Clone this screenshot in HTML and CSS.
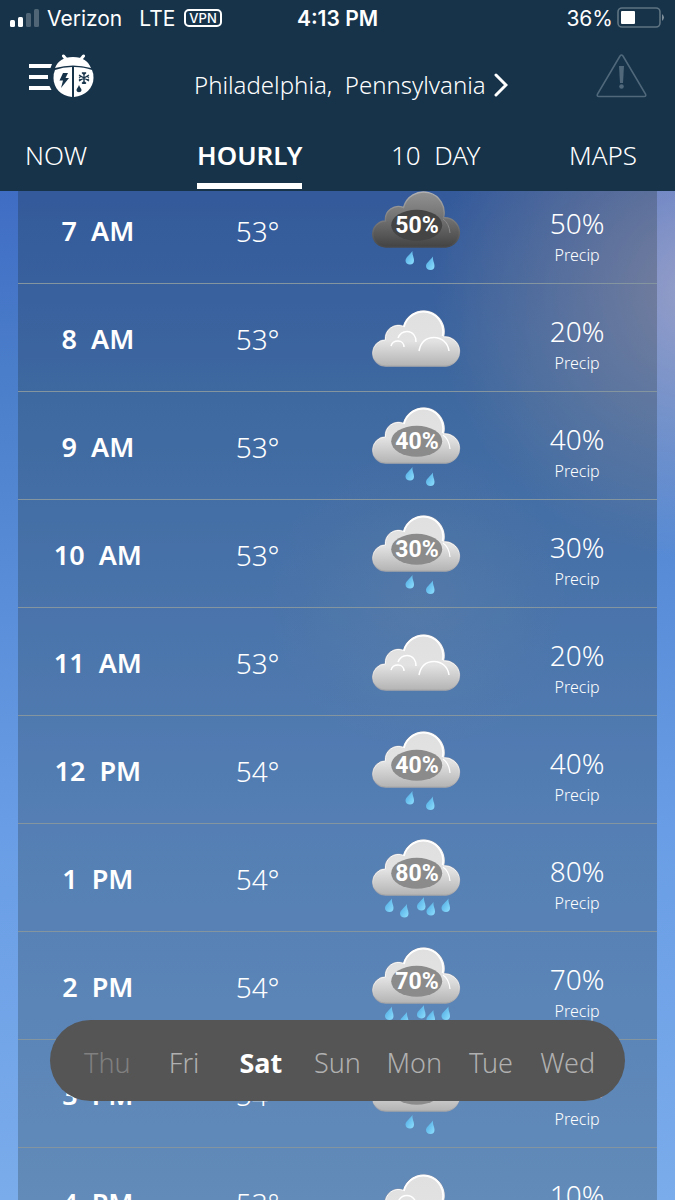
FILE: index.html
```html
<!DOCTYPE html>
<html lang="en">
<head>
  <meta charset="UTF-8">
  <meta name="viewport" content="width=device-width, initial-scale=1">
  <title>Hourly Forecast - Philadelphia</title>
  <link rel="stylesheet" href="styles.css">
</head>
<body>

<!-- shared icon shapes -->
<svg class="defs" width="0" height="0" aria-hidden="true">
  <defs>
    <linearGradient id="lightFill" x1="0" y1="0" x2="0" y2="1">
      <stop offset="0" stop-color="#e0e0e0"/>
      <stop offset="0.55" stop-color="#e2e2e2"/>
      <stop offset="1" stop-color="#b4b4b4"/>
    </linearGradient>
    <linearGradient id="darkFill" x1="0" y1="0" x2="0" y2="1">
      <stop offset="0" stop-color="#929292"/>
      <stop offset="0.5" stop-color="#707070"/>
      <stop offset="1" stop-color="#434343"/>
    </linearGradient>
    <linearGradient id="rim" x1="0" y1="0" x2="0" y2="1">
      <stop offset="0" stop-color="#fff"/>
      <stop offset="0.6" stop-color="#f4f4f4"/>
      <stop offset="1" stop-color="#a6a6a6"/>
    </linearGradient>
    <linearGradient id="darkRim" x1="0" y1="0" x2="0" y2="1">
      <stop offset="0" stop-color="#b2b2b2"/>
      <stop offset="1" stop-color="#484848"/>
    </linearGradient>
    <linearGradient id="dropFill" x1="0" y1="0" x2="1" y2="1">
      <stop offset="0" stop-color="#4aa6e0"/>
      <stop offset="1" stop-color="#8fe0ff"/>
    </linearGradient>
    <path id="cloudShape" d="M14 56 A13 13 0 0 1 13.5 30 A13 13 0 0 1 31.5 16.5 A20 20 0 1 1 71.5 26.8 A14.6 14.6 0 0 1 74 56 Z"/>
    <g id="cloud">
      <use href="#cloudShape" fill="url(#lightFill)" stroke="#8f99ad" stroke-width="1.6"/>
      <use href="#cloudShape" fill="url(#lightFill)" stroke="url(#rim)" stroke-width="1"/>
      <path d="M32 17 A19.4 19.4 0 0 1 70.5 26" fill="none" stroke="#fff" stroke-width="1.6"/>
    </g>
    <g id="rainCloud">
      <use href="#cloud"/>
      <path d="M71 28 Q77 32 78 42" fill="none" stroke="#fff" stroke-width="1.2"/>
      <ellipse cx="44.7" cy="34.3" rx="25.5" ry="15.5" fill="#8b8b8b"/>
    </g>
    <g id="darkCloud">
      <use href="#cloudShape" fill="url(#darkFill)" stroke="url(#darkRim)" stroke-width="1.4"/>
      <path d="M71 28 Q77 32 78 42" fill="none" stroke="#888" stroke-width="1"/>
      <ellipse cx="44.7" cy="34.3" rx="25.5" ry="15.5" fill="#444"/>
    </g>
    <g id="plainCloud">
      <use href="#cloud"/>
      <g fill="none" stroke="#fff" stroke-width="1.5">
        <path d="M47 41 C49 31 55 27.5 62 27.5 C70 27.5 76 33 77 41"/>
        <path d="M26 28 C28 23 32 21.5 35 21.5 C41 21.5 44.5 27 44 32"/>
        <path d="M19 36 C20 32 23 31 26 31 C30 31 32 34 32 37"/>
      </g>
    </g>
    <path id="drop" d="M7 0 C4 4 0 6.500 0 9.500 C0 12 2 13.500 4.500 13.500 C7 13.500 8.500 12 8.500 9.500 C8.500 6 6.500 4 7 0 Z" fill="url(#dropFill)"/>
    <g id="lightRain">
      <use href="#drop" x="33.500" y="60"/>
      <use href="#drop" x="54" y="65.500"/>
    </g>
    <g id="heavyRain">
      <use href="#drop" x="13" y="59.500"/>
      <use href="#drop" x="28" y="65"/>
      <use href="#drop" x="45" y="58"/>
      <use href="#drop" x="54.500" y="63"/>
      <use href="#drop" x="69.500" y="59.500"/>
    </g>
  </defs>
</svg>

<div class="screen">
  <header class="header">
    <div class="status">
      <div class="carrier">
        <svg width="30" height="19" viewBox="0 0 30 19" fill="#fff" aria-hidden="true">
          <rect x="0" y="11" width="5" height="7" rx="1.500"/>
          <rect x="8" y="8" width="5" height="10" rx="1.500"/>
          <rect x="16" y="4" width="5" height="14" rx="1.500" opacity=".25"/>
          <rect x="24" y="0" width="5" height="18" rx="1.500" opacity=".25"/>
        </svg>
        <span>Verizon</span>
        <span class="network">LTE</span>
        <span class="vpn">VPN</span>
      </div>
      <span class="clock">4:13 PM</span>
      <div class="battery">
        <span>36%</span>
        <svg width="48" height="22" viewBox="0 0 48 22" aria-hidden="true">
          <rect x="1" y="1" width="42" height="19" rx="4" fill="none" stroke="#5f7482" stroke-width="1.600"/>
          <rect x="4" y="4" width="14" height="13" rx="1" fill="#fff"/>
          <path d="M45 7 Q49 10.500 45 14 Z" fill="#7d8e9a"/>
        </svg>
      </div>
    </div>

    <div class="topbar">
      <button class="icon-btn" aria-label="Menu">
        <svg width="66" height="44" viewBox="0 0 66 44" fill="#fff">
          <path d="M1 10 H24 L22.500 14 H1 Z M1 21 H20 V25 H1 Z M1 32 H21.500 L23.500 36 H1 Z"/>
          <path d="M38 5 L35.500 2 M53 5 L55.500 2" stroke="#fff" stroke-width="3" stroke-linecap="round"/>
          <path d="M27 14 C30 7 35 3 45 3 C55 3 60 7 63 14 Q45 9 27 14 Z"/>
          <path d="M44 13 V43 C33 42 25.500 34 25.500 24 Q25.500 19 27 16 Q35 13 44 13 Z"/>
          <path d="M46 13 V43 C57 42 65.500 34 65.500 24 Q65.500 19 64 16 Q56 13 46 13 Z"/>
          <path d="M35 19 H40 L37.500 24 H41 L33 34 L35 26.500 H31.500 Z" fill="#16334a"/>
          <path d="M56 18 V30 M51 21 L61 27 M51 27 L61 21 M54 18.500 L56 20.500 L58 18.500 M54 29.500 L56 27.500 L58 29.500 M51 23.500 L53 22.500 M61 23.500 L59 22.500 M51 25 L53 26 M61 25 L59 26" stroke="#16334a" stroke-width="1.300" fill="none"/>
          <path d="M51 31 C50 34 48.500 34.500 48.500 36 C48.500 39 53.500 39 53.500 36 C53.500 34.500 52 34 51 31 Z" fill="#16334a"/>
        </svg>
      </button>
      <button class="location">
        <span>Philadelphia,&nbsp; Pennsylvania</span>
        <svg width="14" height="24" viewBox="0 0 14 24" aria-hidden="true">
          <path d="M2 2 L12 12 L2 22" fill="none" stroke="#fff" stroke-width="3" stroke-linecap="round"/>
        </svg>
      </button>
      <button class="icon-btn" aria-label="Alerts">
        <svg width="51" height="44" viewBox="0 0 51 44">
          <path d="M24 2 Q25.500 0 27 2 L49.500 40 Q50.500 42.500 48 42.500 H3 Q0.500 42.500 1.500 40 Z" fill="none" stroke="#50687a" stroke-width="1.600"/>
          <path d="M23 12 H28 L27 29 H24 Z" fill="#50687a"/>
          <circle cx="25.500" cy="32.500" r="2.300" fill="#50687a"/>
        </svg>
      </button>
    </div>

    <nav class="tabs">
      <a href="#now">NOW</a>
      <a href="#hourly" class="active">HOURLY</a>
      <a href="#tenday">10&nbsp; DAY</a>
      <a href="#maps">MAPS</a>
    </nav>
  </header>

  <main class="content">
    <table class="hours">
      <tbody>
        <tr>
          <th scope="row">7&nbsp; AM</th>
          <td class="temp">53°</td>
          <td>
            <svg class="icon" width="90" height="80" viewBox="0 0 90 80"><use href="#darkCloud"/><use href="#lightRain"/><text x="45" y="42">50%</text></svg>
          </td>
          <td class="precip"><b>50%</b><small>Precip</small></td>
        </tr>
        <tr>
          <th scope="row">8&nbsp; AM</th>
          <td class="temp">53°</td>
          <td>
            <svg class="icon" width="90" height="57" viewBox="0 0 90 57"><use href="#plainCloud"/></svg>
          </td>
          <td class="precip"><b>20%</b><small>Precip</small></td>
        </tr>
        <tr>
          <th scope="row">9&nbsp; AM</th>
          <td class="temp">53°</td>
          <td>
            <svg class="icon" width="90" height="80" viewBox="0 0 90 80"><use href="#rainCloud"/><use href="#lightRain"/><text x="45" y="42">40%</text></svg>
          </td>
          <td class="precip"><b>40%</b><small>Precip</small></td>
        </tr>
        <tr>
          <th scope="row">10&nbsp; AM</th>
          <td class="temp">53°</td>
          <td>
            <svg class="icon" width="90" height="80" viewBox="0 0 90 80"><use href="#rainCloud"/><use href="#lightRain"/><text x="45" y="42">30%</text></svg>
          </td>
          <td class="precip"><b>30%</b><small>Precip</small></td>
        </tr>
        <tr>
          <th scope="row">11&nbsp; AM</th>
          <td class="temp">53°</td>
          <td>
            <svg class="icon" width="90" height="57" viewBox="0 0 90 57"><use href="#plainCloud"/></svg>
          </td>
          <td class="precip"><b>20%</b><small>Precip</small></td>
        </tr>
        <tr>
          <th scope="row">12&nbsp; PM</th>
          <td class="temp">54°</td>
          <td>
            <svg class="icon" width="90" height="80" viewBox="0 0 90 80"><use href="#rainCloud"/><use href="#lightRain"/><text x="45" y="42">40%</text></svg>
          </td>
          <td class="precip"><b>40%</b><small>Precip</small></td>
        </tr>
        <tr>
          <th scope="row">1&nbsp; PM</th>
          <td class="temp">54°</td>
          <td>
            <svg class="icon" width="90" height="80" viewBox="0 0 90 80"><use href="#rainCloud"/><use href="#heavyRain"/><text x="45" y="42">80%</text></svg>
          </td>
          <td class="precip"><b>80%</b><small>Precip</small></td>
        </tr>
        <tr>
          <th scope="row">2&nbsp; PM</th>
          <td class="temp">54°</td>
          <td>
            <svg class="icon" width="90" height="80" viewBox="0 0 90 80"><use href="#rainCloud"/><use href="#heavyRain"/><text x="45" y="42">70%</text></svg>
          </td>
          <td class="precip"><b>70%</b><small>Precip</small></td>
        </tr>
        <tr>
          <th scope="row">3&nbsp; PM</th>
          <td class="temp">54°</td>
          <td>
            <svg class="icon" width="90" height="80" viewBox="0 0 90 80"><use href="#rainCloud"/><use href="#lightRain"/><text x="45" y="42">30%</text></svg>
          </td>
          <td class="precip"><b>30%</b><small>Precip</small></td>
        </tr>
        <tr>
          <th scope="row">4&nbsp; PM</th>
          <td class="temp">53°</td>
          <td>
            <svg class="icon" width="90" height="57" viewBox="0 0 90 57"><use href="#plainCloud"/></svg>
          </td>
          <td class="precip"><b>10%</b><small>Precip</small></td>
        </tr>
      </tbody>
    </table>
  </main>

  <!-- floating day picker -->
  <div class="days">
    <button class="past">Thu</button>
    <button>Fri</button>
    <button class="active">Sat</button>
    <button>Sun</button>
    <button>Mon</button>
    <button>Tue</button>
    <button>Wed</button>
  </div>
</div>

</body>
</html>
```

FILE: styles.css
```css
* {
  box-sizing: border-box;
}
body {
  margin: 0;
  font-family: "Noto Sans", "Open Sans", sans-serif;
  color: #fff;
}
button {
  font-family: inherit;
  color: inherit;
  background: none;
  border: none;
  padding: 0;
  cursor: pointer;
}
svg {
  display: block;
}
.defs {
  position: absolute;
}
.screen {
  position: relative;
  display: flex;
  flex-direction: column;
  height: 100vh;
  overflow: hidden;
  background:
    radial-gradient(circle 270px at 104% 290px, rgba(190, 178, 200, 0.68), rgba(190, 178, 200, 0) 100%),
    radial-gradient(circle 150px at 62% 600px, rgba(170, 185, 200, 0.16), rgba(170, 185, 200, 0) 100%),
    linear-gradient(#3d68c0 0, #3f6dc4 190px, #4c80cb 400px, #5b8fd9 620px, #699de5 830px, #7aaceb 1200px);
}

/* header */
.header {
  position: relative;
  z-index: 1;
  flex: none;
  background: #16334a;
  padding-bottom: 2px;
}
.status {
  display: grid;
  grid-template-columns: 1fr auto 1fr;
  align-items: center;
  height: 36px;
  padding: 0 10px;
  font-family: Inter, sans-serif;
  font-size: 21px;
}
.carrier,
.battery {
  display: flex;
  align-items: center;
  gap: 7px;
}
.battery {
  justify-content: flex-end;
  gap: 4px;
}
.network {
  margin-left: 10px;
}
.vpn {
  margin-left: 2px;
  padding: 0 3px;
  border: 2px solid #fff;
  border-radius: 5px;
  font-size: 13px;
  line-height: 14px;
  font-weight: 500;
}
.clock {
  font-weight: 600;
}
.topbar {
  display: grid;
  grid-template-columns: 166px 1fr auto;
  padding: 18px 28px 0;
}
.location {
  display: flex;
  align-items: center;
  gap: 8px;
  justify-self: start;
  padding-top: 18px;
  font-size: 24px;
  line-height: 24px;
  font-weight: 300;
}
.tabs {
  display: grid;
  grid-template-columns: 173fr 195fr 179fr auto;
  justify-items: start;
  padding: 38px 38px 0 25px;
}
.tabs a {
  color: #fff;
  text-decoration: none;
  font-size: 26px;
  line-height: 38px;
  font-weight: 300;
  padding-bottom: 9px;
  border-bottom: 6px solid transparent;
}
.tabs .active {
  font-weight: 600;
  border-color: #fff;
}

/* hourly list, scrolled a little under the header */
.content {
  flex: 1;
  min-height: 0;
  margin-top: -15px;
  padding: 0 18px;
  overflow: hidden;
}
.hours {
  width: 100%;
  table-layout: fixed;
  border-collapse: separate;
  border-spacing: 0;
  background: rgba(15, 25, 10, 0.22);
}
.hours th,
.hours td {
  height: 108px;
  padding: 2px 0 0;
  border-bottom: 1px solid #8595a0;
  text-align: center;
  vertical-align: middle;
}
.hours th {
  font-size: 27px;
  font-weight: 600;
}
.hours .temp {
  font-size: 28px;
  font-weight: 300;
}
.icon {
  margin: 0 auto;
}
.icon text {
  fill: #fff;
  font-family: Roboto, sans-serif;
  font-size: 23px;
  font-weight: 700;
  text-anchor: middle;
}
.hours .precip {
  padding-top: 14px;
}
.precip b,
.precip small {
  display: block;
}
.precip b {
  font-size: 28px;
  line-height: 36px;
  font-weight: 300;
}
.precip small {
  font-size: 16px;
  line-height: 28px;
  font-weight: 300;
}

/* day picker */
.days {
  position: absolute;
  z-index: 2;
  left: 50px;
  right: 50px;
  bottom: 99px;
  display: grid;
  grid-template-columns: repeat(7, 1fr);
  height: 81px;
  padding: 3px 19px 0;
  border-radius: 41px;
  background: #555;
}
.days button {
  font-size: 27px;
  font-weight: 300;
  color: #b0b0b0;
}
.days .past {
  color: #808080;
}
.days .active {
  font-weight: 700;
  color: #fff;
}
```
